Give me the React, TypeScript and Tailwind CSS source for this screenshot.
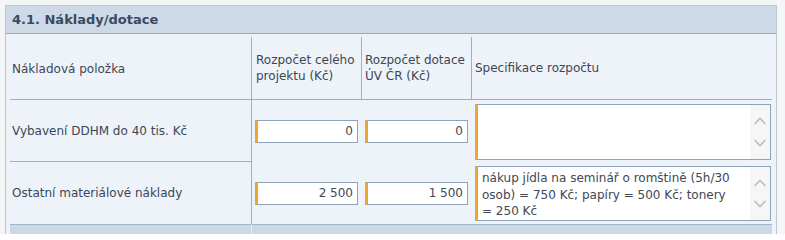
import React from "react";

const font = { fontFamily: '"DejaVu Sans", Verdana, sans-serif' };

function NumInput({ value, ml }: { value: string; ml: string }) {
  return (
    <div
      className={`${ml} flex h-[23px] w-[103px] items-center justify-end border border-l-[3px] border-[#8fa2b8] border-l-[#f0a62c] bg-white pr-[4px] text-[12px] text-[#404854]`}
    >
      {value}
    </div>
  );
}

function Chevron({ up }: { up?: boolean }) {
  return (
    <svg width="14" height="9" viewBox="0 0 14 9" className="block">
      <path
        d={up ? "M1.5 8 L7 2.5 L12.5 8" : "M1.5 1 L7 6.5 L12.5 1"}
        fill="none"
        stroke="#bcc0c5"
        strokeWidth="1.7"
      />
    </svg>
  );
}

function TextArea({ h, lines }: { h: string; lines: string[] }) {
  return (
    <div
      className={`flex ${h} w-[296px] border border-l-[3px] border-[#8fa2b8] border-l-[#f0a62c] bg-white`}
    >
      <div className="flex-1 pl-[4px] pt-[3px] text-[12px] leading-[16.5px] text-[#404854]">
        {lines.map((l, i) => (
          <div key={i} className="whitespace-nowrap">
            {l}
          </div>
        ))}
      </div>
      <div className="flex w-[20px] flex-col items-center justify-between bg-[#f6f6f6] py-[11px]">
        <Chevron up />
        <Chevron />
      </div>
    </div>
  );
}

export default function App() {
  return (
    <div className="h-[234px] w-[785px] overflow-hidden bg-[#f4f5f7] pl-[5px] pt-[5px]" style={font}>
      <div className="w-[772px] border border-[#bcc7d4] bg-[#eef3fa]">
        <div className="flex h-[28px] items-center border-b border-[#9aabbf] bg-[#cdd9e7] pl-[6px] text-[13px] font-bold text-[#3a4a62]">
          4.1. Náklady/dotace
        </div>
        <div className="px-[4px] pt-[3px]">
          <div className="grid grid-cols-[242px_110px_110px_300px] text-[12px] text-[#3c4654]">
            {/* header row */}
            <div className="flex h-[63px] items-center border-b border-r border-[#9fb0c4] pl-[2px] pt-[2px]">
              Nákladová položka
            </div>
            <div className="flex h-[63px] items-center border-b border-r border-[#9fb0c4] pl-[4px] leading-[16px]">
              Rozpočet celého
              <br />
              projektu (Kč)
            </div>
            <div className="flex h-[63px] items-center border-b border-r border-[#9fb0c4] pl-[3px] leading-[16px]">
              Rozpočet dotace
              <br />
              ÚV ČR (Kč)
            </div>
            <div className="flex h-[63px] items-center border-b border-[#9fb0c4] pl-[3px]">
              Specifikace rozpočtu
            </div>

            {/* row 1 */}
            <div className="flex h-[62px] items-center border-b border-r border-[#9fb0c4] pl-[2px]">
              Vybavení DDHM do 40 tis. Kč
            </div>
            <div className="flex h-[62px] items-center">
              <NumInput value="0" ml="ml-[3px]" />
            </div>
            <div className="flex h-[62px] items-center">
              <NumInput value="0" ml="ml-[3px]" />
            </div>
            <div className="h-[62px] pl-[3px] pt-[4px]">
              <TextArea h="h-[56px]" lines={[]} />
            </div>

            {/* row 2 */}
            <div className="flex h-[62px] items-center border-r border-[#9fb0c4] pl-[2px]">
              Ostatní materiálové náklady
            </div>
            <div className="flex h-[62px] items-center">
              <NumInput value="2 500" ml="ml-[3px]" />
            </div>
            <div className="flex h-[62px] items-center">
              <NumInput value="1 500" ml="ml-[3px]" />
            </div>
            <div className="h-[62px] pl-[3px] pt-[4px]">
              <TextArea
                h="h-[55px]"
                lines={[
                  "nákup jídla na seminář o romštině (5h/30",
                  "osob) = 750 Kč; papíry = 500 Kč; tonery",
                  "= 250 Kč",
                ]}
              />
            </div>

            {/* footer row */}
            <div className="h-[20px] border-r border-t border-[#a5b4c6] border-r-[#e6edf5] bg-[#cbd8e6]" />
            <div className="col-span-3 h-[20px] border-t border-[#a5b4c6] bg-[#cbd8e6]" />
          </div>
        </div>
      </div>
    </div>
  );
}
